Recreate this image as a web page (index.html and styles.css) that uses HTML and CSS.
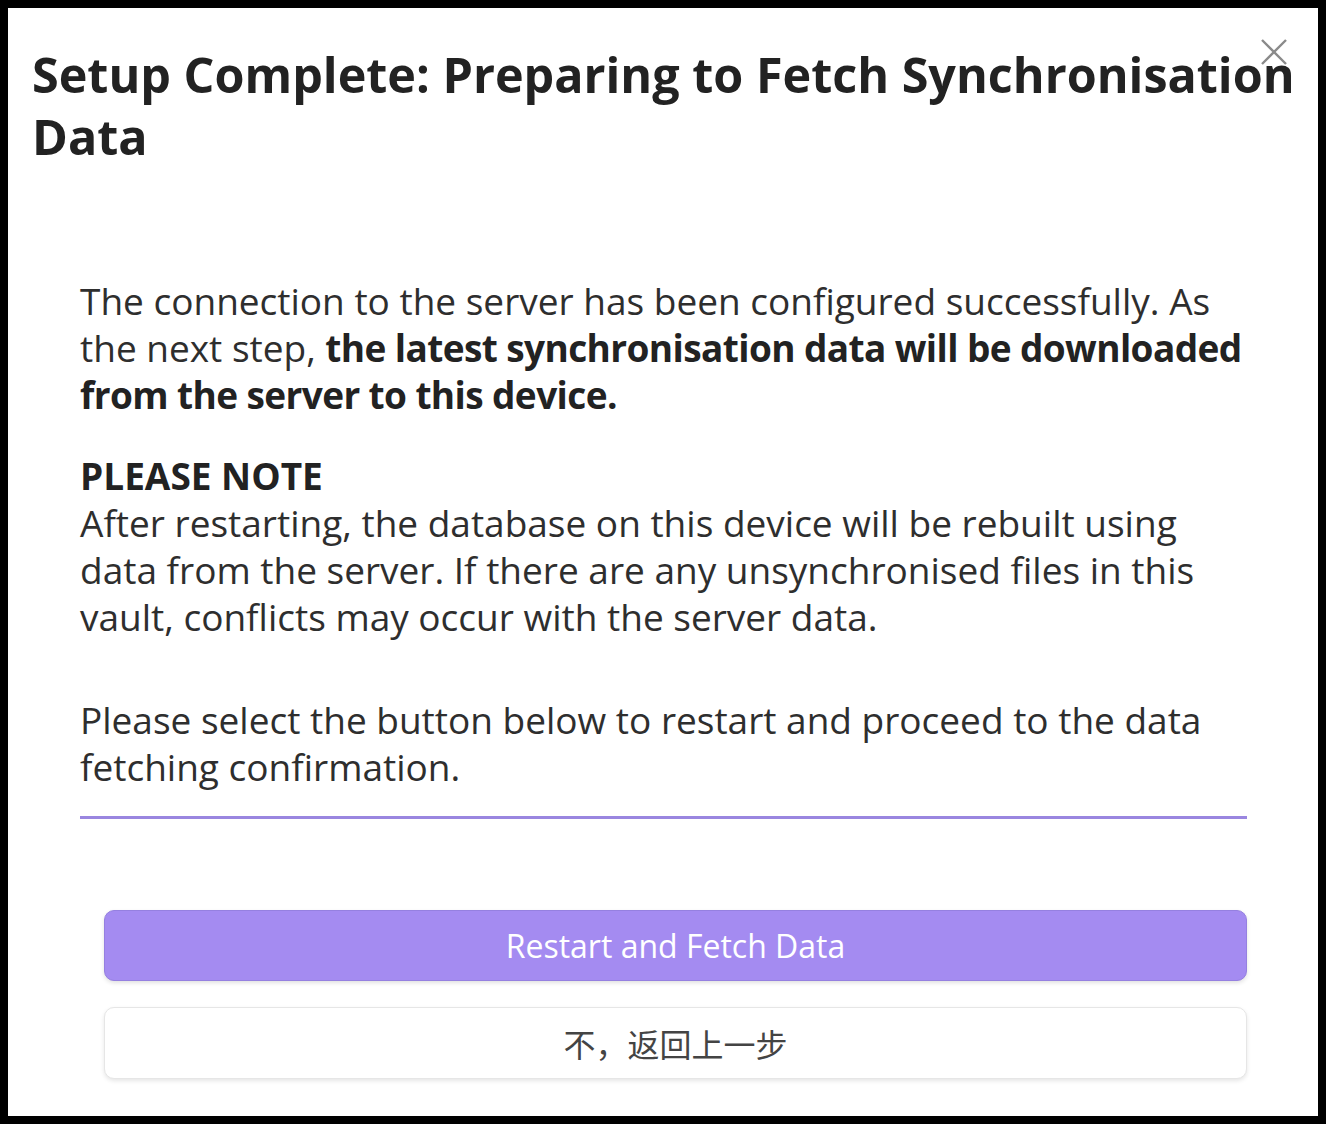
FILE: index.html
```html
<!DOCTYPE html>
<html lang="en">
<head>
    <meta charset="UTF-8">
    <meta name="viewport" content="width=device-width, initial-scale=1.0">
    <title>Setup Complete</title>
    <link rel="stylesheet" href="styles.css">
</head>
<body>
    <div class="modal">
        <button class="close-button" aria-label="Close">
            <svg width="28" height="28" viewBox="0 0 28 28">
                <path d="M2 2 L26 26 M26 2 L2 26" stroke="#8a8a8a" stroke-width="2.4" fill="none"/>
            </svg>
        </button>
        <h1 class="modal-title">Setup Complete: Preparing to Fetch Synchronisation Data</h1>

        <div class="modal-content">
            <p>The connection to the server has been configured successfully. As the next step, <strong class="tight">the latest synchronisation data will be downloaded from the server to this device.</strong></p>

            <p class="note">
                <strong>PLEASE NOTE</strong><br>
                After restarting, the database on this device will be rebuilt using data from the server. If there are any unsynchronised files in this vault, conflicts may occur with the server data.
            </p>

            <p class="last">Please select the button below to restart and proceed to the data fetching confirmation.</p>

            <hr class="divider">

            <div class="actions">
                <button class="btn btn-primary">Restart and Fetch Data</button>
                <button class="btn btn-secondary">不，返回上一步</button>
            </div>
        </div>
    </div>
</body>
</html>
```

FILE: styles.css
```css
html {
    background-color: #000000;
}
body {
    margin: 8px;
    min-height: calc(100vh - 16px);
    background-color: #ffffff;
    font-family: "Open Sans", "Noto Sans CJK SC", sans-serif;
    color: #262626;
    box-sizing: border-box;
}
.modal {
    position: relative;
    padding: 35px 24px 24px 24px;
}
.close-button {
    position: absolute;
    top: 30px;
    right: 30px;
    padding: 0;
    border: none;
    background: none;
    cursor: pointer;
}
.close-button svg {
    display: block;
}
.modal-title {
    margin: 0 -22px 0 0;
    font-size: 48.5px;
    font-weight: 700;
    line-height: 62px;
    color: #222222;
}
.modal-content {
    padding: 110px 47px 0 48px;
    font-size: 37px;
    line-height: 47px;
    color: #2e2e2e;
}
.modal-content p {
    margin: 0 -8px 34px 0;
}
.modal-content strong {
    font-weight: 700;
    color: #222222;
}
.modal-content strong.tight {
    letter-spacing: -0.6px;
}
.modal-content p.last {
    margin-top: 56px;
    margin-bottom: 0;
}
.divider {
    margin: 26px 0 0;
    border: none;
    height: 3px;
    background-color: #9a86e0;
}
.actions {
    display: flex;
    flex-direction: column;
    gap: 26px;
    padding: 91px 0 0 24px;
}
.btn {
    width: 100%;
    height: 71px;
    border-radius: 10px;
    font-family: "Open Sans", "Noto Sans CJK SC", sans-serif;
    font-size: 32px;
    cursor: pointer;
}
.btn-primary {
    background-color: #a48bf1;
    color: #ffffff;
    border: 1px solid #9580e0;
    box-shadow: 0 2px 4px rgba(0, 0, 0, 0.12);
}
.btn-secondary {
    height: 72px;
    background-color: #ffffff;
    color: #444444;
    border: 1px solid #e6e6e6;
    box-shadow: 0 2px 4px rgba(0, 0, 0, 0.1);
}
```
